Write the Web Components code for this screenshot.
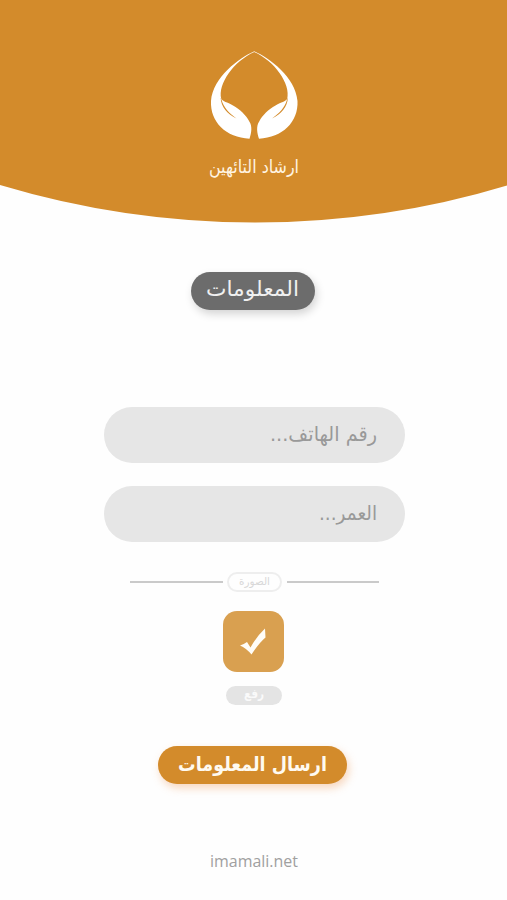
<!DOCTYPE html>
<html lang="ar">
<head>
<meta charset="utf-8">
<title>ارشاد التائهين</title>
<style>
html,body{margin:0;padding:0;background:#fefefe}
body{width:507px;height:900px;overflow:hidden;font-family:"DejaVu Sans","Noto Sans",sans-serif}
</style>
</head>
<body>
<info-page></info-page>
<script>
const define = (name, html, ready) => customElements.define(name, class extends HTMLElement {
  constructor() {
    super();
    this.attachShadow({mode: 'open'}).innerHTML = html;
  }
  connectedCallback() { if (ready) ready.call(this, this.shadowRoot); }
});

// One line of text condensed or widened to the width given in its attribute.
define('fit-text', `<style>
:host{display:flex;justify-content:flex-start;flex:none;white-space:nowrap;line-height:24px;height:24px;direction:ltr}
span{display:block;flex:none;direction:rtl;transform-origin:0 50%}
</style><span><slot></slot></span>`, function (root) {
  const want = +this.getAttribute('width');
  this.style.width = want + 'px';
  const s = root.querySelector('span');
  s.style.transform = `scaleX(${want / s.getBoundingClientRect().width})`;
});

const hand = `<path d="M45.300 1.200C30 8 4 27 2 51C1 72 17 87.500 40.500 88.700C42.500 83 43.500 76 40.300 71.500C37 65 31 59.500 24 55.500C18 52 14 51.500 12.300 49C8.500 34 25 11 45.300 2Z"/>
<path d="M11.600 47.500C12 57 18.500 64.500 27.500 68.500C20.500 63.500 14.500 57.500 12.600 50Z" fill="#d38b2b"/>`;
define('hands-logo', `<style>:host{display:block;width:90px;height:90px}svg{display:block}</style>
<svg width="90" height="90" viewBox="0 0 90 90" fill="#fff"><g>${hand}</g><g transform="matrix(-1 0 0 1 90.500 0)">${hand}</g></svg>`);

define('brand-header', `<style>
:host{display:grid;height:223px}
svg,div{grid-area:1/1}
svg{display:block}
div{display:flex;flex-direction:column;align-items:center;padding-top:50px}
fit-text{margin-top:15px;color:#fff4e2;font-size:18px}
</style>
<svg width="507" height="223"><path d="M0 0H507V185.500Q385 222.500 255 222.500Q125 222.500 0 185Z" fill="#d38b2b"/></svg>
<div><hands-logo></hands-logo><fit-text width="90"><slot></slot></fit-text></div>`);

define('pill-title', `<style>
:host{display:flex;justify-content:center;box-sizing:border-box;width:124px;height:38px;padding-top:5px;border-radius:19px;background:#6c6c6c;color:#f0f0f0;font-size:21px;box-shadow:2px 4px 8px #0000002b}
</style><fit-text width="93"><slot></slot></fit-text>`);

define('text-field', `<style>
:host{display:flex;justify-content:flex-end;align-items:center;box-sizing:border-box;width:301px;height:56px;padding:0 28px 2px 0;border-radius:28px;background:#e6e6e6;color:#999;font-size:20px}
</style><slot></slot>`);

define('section-divider', `<style>
:host{display:flex;align-items:center;justify-content:space-between;width:249px;height:20px}
i{width:92.500px;height:2px;background:#cacaca}
b{display:flex;justify-content:center;align-items:center;box-sizing:border-box;width:55px;height:20px;border:2px solid #eee;border-radius:10px;color:#d8d8d8;font-size:11px;font-weight:400}
</style><i></i><b><fit-text width="31"><slot></slot></fit-text></b><i></i>`);

define('check-tile', `<style>
:host{display:block;width:61px;height:61px;border-radius:14px;background:#d9a050}
svg{display:block}
</style><svg width="61" height="61"><path d="M17 34.500Q21 33 24 31L27.500 36.500Q34 25 42 17.500L42.500 26.500Q36 32 28.500 43.500Q23 37 17 34.500Z" fill="#fffdf8"/></svg>`);

define('upload-tag', `<style>
:host{display:flex;justify-content:center;align-items:center;width:56px;height:19px;border-radius:9.500px;background:#e4e4e4;color:#fafafa;font-size:13px;font-weight:700}
fit-text{margin-top:-3px}
</style><fit-text width="20"><slot></slot></fit-text>`);

define('submit-button', `<style>
:host{display:flex;justify-content:center;box-sizing:border-box;width:189px;height:38px;padding-top:6px;border-radius:19px;background:#d38b2b;color:#fffaf0;font-size:20px;font-weight:700;box-shadow:2px 4px 8px #ed9b5c66}
</style><fit-text width="149"><slot></slot></fit-text>`);

define('info-page', `<style>
:host{display:flex;flex-direction:column;align-items:center;width:507px;height:900px}
brand-header{width:507px;flex:none}
pill-title{margin:49px 2px 0 0}
.fields{display:flex;flex-direction:column;gap:23px;margin:97px 0 0 2px}
section-divider{margin-top:30px;margin-left:2px}
check-tile{margin-top:19px}
upload-tag{margin-top:14px}
submit-button{margin:41px 2px 0 0}
footer{margin:65px 0 0 1px;font:400 16px/24px "Open Sans","Noto Sans",sans-serif;color:#a0a0a0}
</style>
<brand-header>ارشاد التائهين</brand-header>
<pill-title>المعلومات</pill-title>
<div class="fields">
<text-field><fit-text width="107">رقم الهاتف...</fit-text></text-field>
<text-field><fit-text width="58">العمر...</fit-text></text-field>
</div>
<section-divider>الصورة</section-divider>
<check-tile></check-tile>
<upload-tag>رفع</upload-tag>
<submit-button>ارسال المعلومات</submit-button>
<footer><fit-text width="88">imamali.net</fit-text></footer>`);
</script>
</body>
</html>
